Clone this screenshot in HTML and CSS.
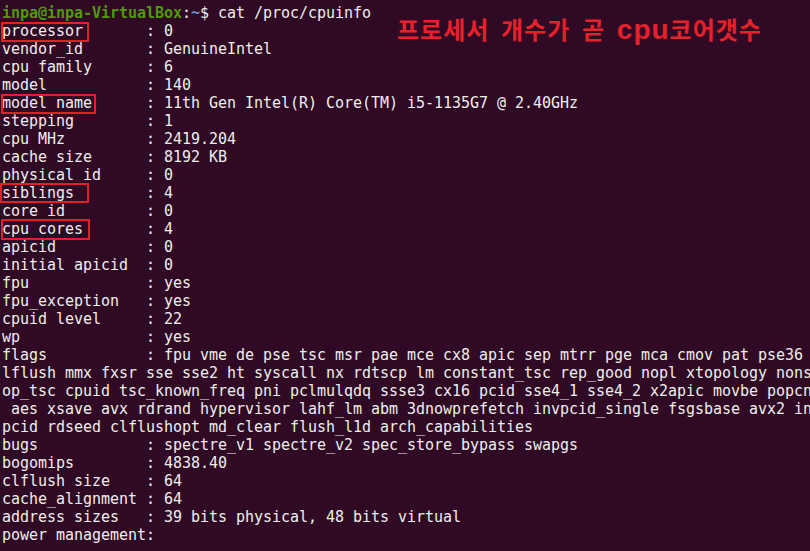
FILE: index.html
```html
<!DOCTYPE html>
<html lang="ko">
<head>
<meta charset="utf-8">
<title>cat /proc/cpuinfo</title>
<link rel="stylesheet" href="styles.css">
</head>
<body>
<div class="term">
<pre class="out"><span class="user">inpa@inpa-VirtualBox</span>:<span class="path">~</span>$ cat /proc/cpuinfo
processor       : 0
vendor_id       : GenuineIntel
cpu family      : 6
model           : 140
model name      : 11th Gen Intel(R) Core(TM) i5-1135G7 @ 2.40GHz
stepping        : 1
cpu MHz         : 2419.204
cache size      : 8192 KB
physical id     : 0
siblings        : 4
core id         : 0
cpu cores       : 4
apicid          : 0
initial apicid  : 0
fpu             : yes
fpu_exception   : yes
cpuid level     : 22
wp              : yes
flags           : fpu vme de pse tsc msr pae mce cx8 apic sep mtrr pge mca cmov pat pse36 c
lflush mmx fxsr sse sse2 ht syscall nx rdtscp lm constant_tsc rep_good nopl xtopology nonst
op_tsc cpuid tsc_known_freq pni pclmulqdq ssse3 cx16 pcid sse4_1 sse4_2 x2apic movbe popcnt
 aes xsave avx rdrand hypervisor lahf_lm abm 3dnowprefetch invpcid_single fsgsbase avx2 inv
pcid rdseed clflushopt md_clear flush_l1d arch_capabilities
bugs            : spectre_v1 spectre_v2 spec_store_bypass swapgs
bogomips        : 4838.40
clflush size    : 64
cache_alignment : 64
address sizes   : 39 bits physical, 48 bits virtual
power management:</pre>
<div class="mark mark-processor"></div>
<div class="mark mark-model"></div>
<div class="mark mark-siblings"></div>
<div class="mark mark-cores"></div>
<div class="note">프로세서 개수가 곧 <span class="note-latin">cpu</span>코어갯수</div>
</div>
</body>
</html>
```
FILE: styles.css
```css
html, body {
  margin: 0;
  padding: 0;
  background: #300a24;
  overflow: hidden;
}

.term {
  position: relative;
  width: 810px;
  height: 551px;
  overflow: hidden;
  background: #300a24;
}

.out {
  margin: 0;
  padding: 4px 0 0 2px;
  font-family: "DejaVu Sans Mono", "Liberation Mono", monospace;
  font-size: 15px;
  letter-spacing: -0.03px;
  line-height: 18px;
  color: #eeeeec;
  white-space: pre;
}

.user {
  color: #4e9a06;
  font-weight: bold;
}

.path {
  color: #7191c9;
  font-weight: bold;
}

.mark {
  position: absolute;
  box-sizing: border-box;
  border: 2px solid #e2202a;
}

.mark-processor { left: 1px; top: 22px; width: 88px; height: 20px; }
.mark-model { left: 1px; top: 94px; width: 95px; height: 20px; }
.mark-siblings { left: 0; top: 183px; width: 89px; height: 20px; }
.mark-cores { left: 1px; top: 219px; width: 89px; height: 21px; }

.note {
  position: absolute;
  left: 397px;
  top: 12px;
  font-family: "Noto Sans CJK KR", "Noto Sans", sans-serif;
  font-weight: bold;
  font-size: 24px;
  letter-spacing: 1px;
  word-spacing: 4px;
  line-height: 34px;
  color: #e8202a;
  white-space: nowrap;
}

.note-latin {
  font-family: "Liberation Sans", "Noto Sans CJK KR", sans-serif;
  font-weight: 900;
  font-size: 28px;
  letter-spacing: 1px;
}
```
